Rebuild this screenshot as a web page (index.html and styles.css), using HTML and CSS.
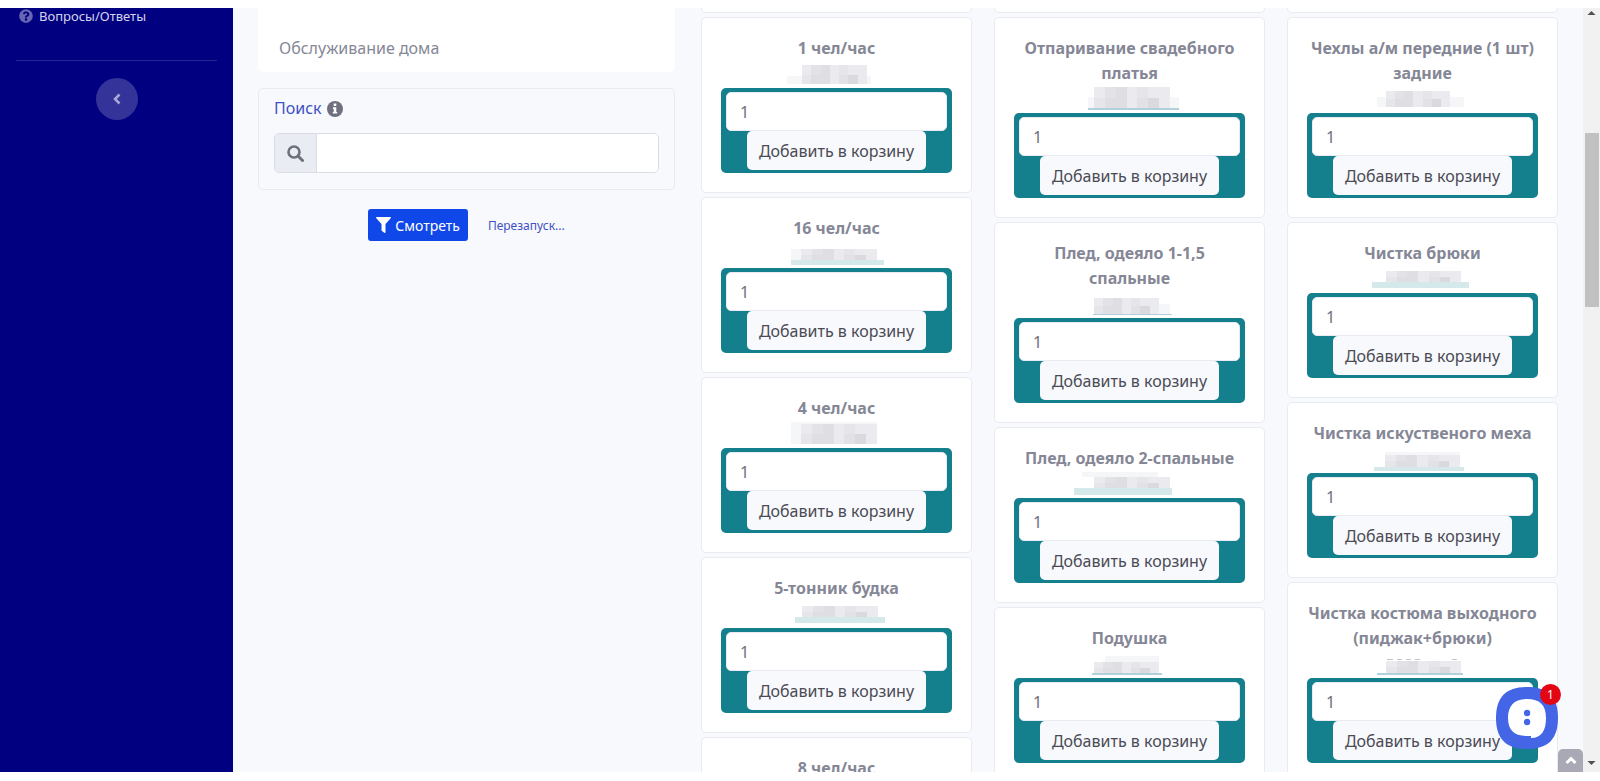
FILE: index.html
```html
<!DOCTYPE html>
<html lang="ru">

<head>
  <meta charset="UTF-8">
  <title>Каталог услуг</title>
  <link rel="stylesheet" href="styles.css">
</head>

<body>

  <!-- shared cells for the hidden prices -->
  <svg class="defs" aria-hidden="true">
    <symbol id="mosaic" viewBox="0 0 7 2" preserveAspectRatio="none">
      <rect width="7" height="2" fill="#ebebef" />
      <rect x="1" width="1" height="1" fill="#e3e3e7" />
      <rect x="2" width="1" height="1" fill="#dedee3" />
      <rect x="4" width="1" height="1" fill="#e6e6ea" />
      <rect y="1" width="1" height="1" fill="#e6e6ea" />
      <rect x="1" y="1" width="2" height="1" fill="#dedee3" />
      <rect x="4" y="1" width="1" height="1" fill="#e2e2e6" />
      <rect x="5" y="1" width="1" height="1" fill="#d9d9de" />
    </symbol>
  </svg>

  <div id="app">

    <nav id="sidebar">
      <a class="nav-item" href="#">
        <svg width="14" height="14" viewBox="0 0 512 512"><path fill="currentColor" d="M504 256c0 137-111 248-248 248S8 393 8 256 119 8 256 8s248 111 248 248zM262.700 90c-54.500 0-89.300 23-116.500 63.800-3.500 5.300-2.400 12.400 2.700 16.300l34.700 26.300c5.200 3.900 12.600 3 16.700-2.100 17.900-22.700 30.100-35.800 57.300-35.800 20.400 0 45.700 13.100 45.700 33 0 15-12.400 22.700-32.500 34C247.100 238.500 216 254.900 216 296v4c0 6.600 5.400 12 12 12h56c6.600 0 12-5.400 12-12v-1.300c0-28.500 83.200-29.600 83.200-106.700 0-58-60.200-102-116.500-102zM256 338c-25.400 0-46 20.600-46 46s20.600 46 46 46 46-20.600 46-46-20.600-46-46-46z" /></svg>
        Вопросы/Ответы
      </a>
      <hr>
      <button id="sidebar-toggle" aria-label="Свернуть меню">
        <svg width="8" height="12" viewBox="0 0 8 12"><path d="M6.500 1.500 2 6l4.500 4.500" fill="none" stroke="currentColor" stroke-width="2.500" /></svg>
      </button>
    </nav>

    <main>
      <section class="filters">
        <div class="category-list">
          <a href="#">Обслуживание дома</a>
        </div>

        <div class="search-box">
          <label for="search">Поиск
            <svg width="16" height="16" viewBox="0 0 16 16"><circle cx="8" cy="8" r="8" fill="#6e707e" /><path fill="#fff" d="M6.700 2.600h2.600v2.500H6.700zM6 6.300h3.300v4.600h.9v1.700H5.800v-1.700h.9V8H6z" /></svg>
          </label>
          <div class="input-group">
            <span class="input-icon">
              <svg width="17" height="17" viewBox="0 0 17 17"><circle cx="7" cy="7" r="5.500" fill="none" stroke="#6e707e" stroke-width="2.600" /><path d="M11 11l4.500 4.500" stroke="#6e707e" stroke-width="3" stroke-linecap="round" /></svg>
            </span>
            <input type="text" id="search" name="search">
          </div>
        </div>

        <div class="filter-actions">
          <button id="view-button">
            <svg width="15" height="16" viewBox="0 0 15 16"><path fill="currentColor" d="M.8 0h13.400c.7 0 1 .8.500 1.300L9.500 7v8.200c0 .7-.7 1-1.200.6l-2.300-1.800c-.3-.2-.5-.5-.5-.8V7L.3 1.300C-.2.8.1 0 .8 0z" /></svg>
            Смотреть
          </button>
          <a href="#">Перезапуск...</a>
        </div>
      </section>

      <section class="products">

        <div class="column">
          <div class="card card-end"></div>
          <div class="card">
            <h3>1 чел/час</h3>
            <svg class="price" viewBox="0 0 230 27"><rect class="faint" x="65" y="15" width="84" height="8" /><use href="#mosaic" x="80" y="4" width="65" height="19" /></svg>
            <form class="cart-form">
              <input type="text" value="1" aria-label="Количество">
              <button type="button">Добавить в корзину</button>
            </form>
          </div>
          <div class="card">
            <h3>16 чел/час</h3>
            <svg class="price" viewBox="0 0 230 27"><rect class="faint" x="69" y="8" width="10" height="11" /><use href="#mosaic" x="79" y="8" width="76" height="11" /><rect class="tint" x="69" y="19" width="93" height="5" /></svg>
            <form class="cart-form">
              <input type="text" value="1" aria-label="Количество">
              <button type="button">Добавить в корзину</button>
            </form>
          </div>
          <div class="card">
            <h3>4 чел/час</h3>
            <svg class="price" viewBox="0 0 230 27"><rect class="faint" x="69" y="1" width="86" height="22" /><use href="#mosaic" x="79" y="3" width="76" height="20" /></svg>
            <form class="cart-form">
              <input type="text" value="1" aria-label="Количество">
              <button type="button">Добавить в корзину</button>
            </form>
          </div>
          <div class="card">
            <h3>5-тонник будка</h3>
            <svg class="price" viewBox="0 0 230 27"><use href="#mosaic" x="80" y="5" width="76" height="11" /><rect class="tint" x="73" y="16" width="90" height="6" /></svg>
            <form class="cart-form">
              <input type="text" value="1" aria-label="Количество">
              <button type="button">Добавить в корзину</button>
            </form>
          </div>
          <div class="card">
            <h3>8 чел/час</h3>
          </div>
        </div>

        <div class="column">
          <div class="card card-end"></div>
          <div class="card">
            <h3>Отпаривание свадебного платья</h3>
            <svg class="price" viewBox="0 0 230 27"><rect class="faint" x="73" y="11" width="91" height="11" /><use href="#mosaic" x="79" y="1" width="76" height="21" /><rect class="line" x="73" y="22" width="91" height="2" /></svg>
            <form class="cart-form">
              <input type="text" value="1" aria-label="Количество">
              <button type="button">Добавить в корзину</button>
            </form>
          </div>
          <div class="card">
            <h3>Плед, одеяло 1-1,5 спальные</h3>
            <svg class="price" viewBox="0 0 230 27"><rect class="faint" x="79" y="13" width="76" height="10" /><use href="#mosaic" x="79" y="7" width="65" height="16" /><rect class="line" x="78" y="23" width="79" height="1" /></svg>
            <form class="cart-form">
              <input type="text" value="1" aria-label="Количество">
              <button type="button">Добавить в корзину</button>
            </form>
          </div>
          <div class="card">
            <h3>Плед, одеяло 2-спальные</h3>
            <svg class="price" viewBox="0 0 230 27"><rect class="faint" x="67" y="1" width="76" height="5" /><use href="#mosaic" x="79" y="6" width="76" height="11" /><rect class="tint" x="59" y="17" width="98" height="7" /></svg>
            <form class="cart-form">
              <input type="text" value="1" aria-label="Количество">
              <button type="button">Добавить в корзину</button>
            </form>
          </div>
          <div class="card">
            <h3>Подушка</h3>
            <svg class="price" viewBox="0 0 230 27"><rect class="faint" x="90" y="5" width="54" height="6" /><use href="#mosaic" x="79" y="11" width="65" height="11" /><rect class="line" x="77" y="22" width="70" height="2" /></svg>
            <form class="cart-form">
              <input type="text" value="1" aria-label="Количество">
              <button type="button">Добавить в корзину</button>
            </form>
          </div>
        </div>

        <div class="column">
          <div class="card card-end"></div>
          <div class="card">
            <h3>Чехлы а/м передние (1 шт) задние</h3>
            <svg class="price" viewBox="0 0 230 27"><rect class="faint" x="69" y="11" width="87" height="10" /><use href="#mosaic" x="78" y="5" width="64" height="16" /></svg>
            <form class="cart-form">
              <input type="text" value="1" aria-label="Количество">
              <button type="button">Добавить в корзину</button>
            </form>
          </div>
          <div class="card">
            <h3>Чистка брюки</h3>
            <svg class="price" viewBox="0 0 230 27"><use href="#mosaic" x="78" y="5" width="75" height="11" /><rect class="tint" x="64" y="16" width="97" height="6" /></svg>
            <form class="cart-form">
              <input type="text" value="1" aria-label="Количество">
              <button type="button">Добавить в корзину</button>
            </form>
          </div>
          <div class="card">
            <h3>Чистка искуственого меха</h3>
            <svg class="price" viewBox="0 0 230 27"><rect class="faint" x="77" y="6" width="75" height="3" /><use href="#mosaic" x="77" y="9" width="75" height="12" /><rect class="tint" x="66" y="21" width="90" height="4" /></svg>
            <form class="cart-form">
              <input type="text" value="1" aria-label="Количество">
              <button type="button">Добавить в корзину</button>
            </form>
          </div>
          <div class="card">
            <h3>Чистка костюма выходного (пиджак+брюки)</h3>
            <svg class="price" viewBox="0 0 230 27"><path d="M79 8h6m4 0h5m4 0h5m4 0h5m32 0h5" stroke="#c4c4ca" stroke-width="1" /><use href="#mosaic" x="78" y="10" width="75" height="12" /><rect class="line" x="69" y="22" width="86" height="2" /></svg>
            <form class="cart-form">
              <input type="text" value="1" aria-label="Количество">
              <button type="button">Добавить в корзину</button>
            </form>
          </div>
        </div>

      </section>
    </main>

    <div id="scrollbar">
      <svg width="17" height="17" viewBox="0 0 17 17"><path d="M4.500 7 8.500 3l4 4z" fill="#505050" /></svg>
      <div class="track-before"></div>
      <div class="thumb"></div>
      <div class="track-after"></div>
      <svg width="17" height="17" viewBox="0 0 17 17"><path d="M4.500 6h8l-4 4z" fill="#505050" /></svg>
    </div>

    <button id="scroll-top" aria-label="Наверх">
      <svg width="12" height="9" viewBox="0 0 12 9"><path d="M1.500 7 6 2.500 10.500 7" fill="none" stroke="#fff" stroke-width="3" /></svg>
    </button>

    <button id="chat-button" aria-label="Чат">
      <svg width="62" height="62" viewBox="0 0 62 62">
        <path fill="#4365e6" d="M31 0c21 0 31 10 31 31S52 62 31 62 0 52 0 31 10 0 31 0z" />
        <path fill="#fff" d="M31 12c13 0 19 6 19 19 0 12-4 20-15 20v-2h-4c-13 0-19-6-19-18s6-19 19-19z" />
        <circle cx="31" cy="26" r="3.200" fill="#4365e6" />
        <circle cx="31" cy="35" r="3.200" fill="#4365e6" />
      </svg>
      <span class="badge">1</span>
    </button>

  </div>

</body>

</html>
```
FILE: styles.css
```css
* {
  box-sizing: border-box;
}

body {
  margin: 0;
  height: 100vh;
  padding: 8px 0 9px;
  overflow: hidden;
  background-color: #fff;
  color: #858796;
  font-family: "Noto Sans", sans-serif;
  font-size: 16px;
  line-height: 25px;
}

a {
  color: #3f51c5;
  text-decoration: none;
}

button,
input {
  font-family: inherit;
  font-size: 16px;
}

svg {
  display: block;
  flex: none;
}

.defs {
  position: absolute;
  width: 0;
  height: 0;
}

#app {
  position: relative;
  display: flex;
  height: 100%;
  overflow: hidden;
  background-color: #f8f9fc;
}


#sidebar {
  width: 233px;
  flex: none;
  padding: 0 16px;
  background-color: #000080;
}

.nav-item {
  display: flex;
  align-items: center;
  gap: 6px;
  height: 16px;
  padding-left: 3px;
  color: #d5d5ea;
  font-size: 13px;
}

.nav-item svg {
  color: #6666b3;
}

#sidebar hr {
  margin: 36px 0 17px;
  border: 0;
  border-top: 1px solid #26268f;
}

#sidebar-toggle {
  display: flex;
  align-items: center;
  justify-content: center;
  width: 42px;
  height: 42px;
  margin: 0 auto;
  padding: 0;
  border: 0;
  border-radius: 50%;
  background-color: #333399;
  color: #a9a9d6;
}


main {
  flex: 1;
  display: grid;
  grid-template-columns: 417fr 857fr;
  gap: 26px;
  padding: 0 25px;
}

.category-list {
  height: 64px;
  padding: 28px 21px 0;
  border-radius: 0 0 5px 5px;
  background-color: #fff;
}

.category-list a {
  color: #858796;
}

.search-box {
  margin-top: 16px;
  padding: 7px 15px 16px;
  border: 1px solid #e9ebf2;
  border-radius: 5px;
}

.search-box label {
  display: flex;
  align-items: center;
  gap: 5px;
  margin-bottom: 12px;
  color: #3f51c5;
}

.input-group {
  display: flex;
  height: 40px;
  border: 1px solid #d9dbe5;
  border-radius: 5px;
  overflow: hidden;
  background-color: #fff;
}

.input-icon {
  display: flex;
  align-items: center;
  justify-content: center;
  width: 42px;
  border-right: 1px solid #d9dbe5;
  background-color: #eaecf4;
}

.input-group input {
  flex: 1;
  min-width: 0;
  padding: 0 12px;
  border: 0;
}

.filter-actions {
  display: flex;
  align-items: center;
  justify-content: center;
  gap: 20px;
  margin-top: 19px;
}

.filter-actions a {
  font-size: 12px;
}

#view-button {
  display: flex;
  align-items: center;
  gap: 4px;
  height: 32px;
  padding: 0 8px;
  border: 0;
  border-radius: 3px;
  background-color: #0f47e8;
  color: #fff;
  font-size: 14px;
}


.products {
  display: grid;
  grid-template-columns: repeat(3, 1fr);
  gap: 22px;
  align-items: start;
}

.column {
  display: flex;
  flex-direction: column;
  gap: 4px;
}

.card {
  padding: 18px 19px 19px;
  border: 1px solid #e9ebf2;
  border-radius: 5px;
  background-color: #fff;
  text-align: center;
}

/* tail of the card scrolled out above */
.card-end {
  height: 5px;
  padding: 0;
  border-top: 0;
  border-radius: 0 0 5px 5px;
}

.card h3 {
  margin: 0;
  font-size: 16px;
  font-weight: bold;
}

.price {
  width: 230px;
  height: 27px;
  margin: 0 auto;
  shape-rendering: crispEdges;
}

.price .faint {
  fill: #f5f6f7;
}

.price .tint {
  fill: #d5e8ea;
}

.price .line {
  fill: #b0d0dc;
}

.cart-form {
  display: flex;
  flex-direction: column;
  align-items: center;
  padding: 4px 5px 3px;
  border-radius: 5px;
  background-color: #15808d;
}

.cart-form input {
  width: 100%;
  height: 39px;
  padding: 0 13px;
  border: 1px solid #e9ebf2;
  border-radius: 5px;
  background-color: #fff;
  color: #6e707e;
}

.cart-form button {
  height: 39px;
  padding: 0 12px;
  border: 0;
  border-radius: 5px;
  background-color: #f8f9fc;
  color: #4a4b55;
}


#scrollbar {
  display: flex;
  flex-direction: column;
  width: 17px;
  flex: none;
  background-color: #f1f1f1;
}

.track-before {
  flex: 108;
}

.thumb {
  flex: 174;
  margin: 0 1px 0 2px;
  background-color: #c1c1c1;
}

.track-after {
  flex: 448;
}

#scroll-top {
  position: absolute;
  right: 17px;
  bottom: 0;
  display: flex;
  align-items: center;
  justify-content: center;
  width: 25px;
  height: 23px;
  padding: 0;
  border: 0;
  border-radius: 5px 5px 0 0;
  background-color: #a9a9b6;
}

#chat-button {
  position: absolute;
  right: 42px;
  bottom: 23px;
  padding: 0;
  border: 0;
  background: none;
}

.badge {
  position: absolute;
  top: -3px;
  right: -3px;
  width: 21px;
  height: 21px;
  border-radius: 50%;
  background-color: #e30613;
  color: #fff;
  font-size: 12px;
  line-height: 21px;
}
```
